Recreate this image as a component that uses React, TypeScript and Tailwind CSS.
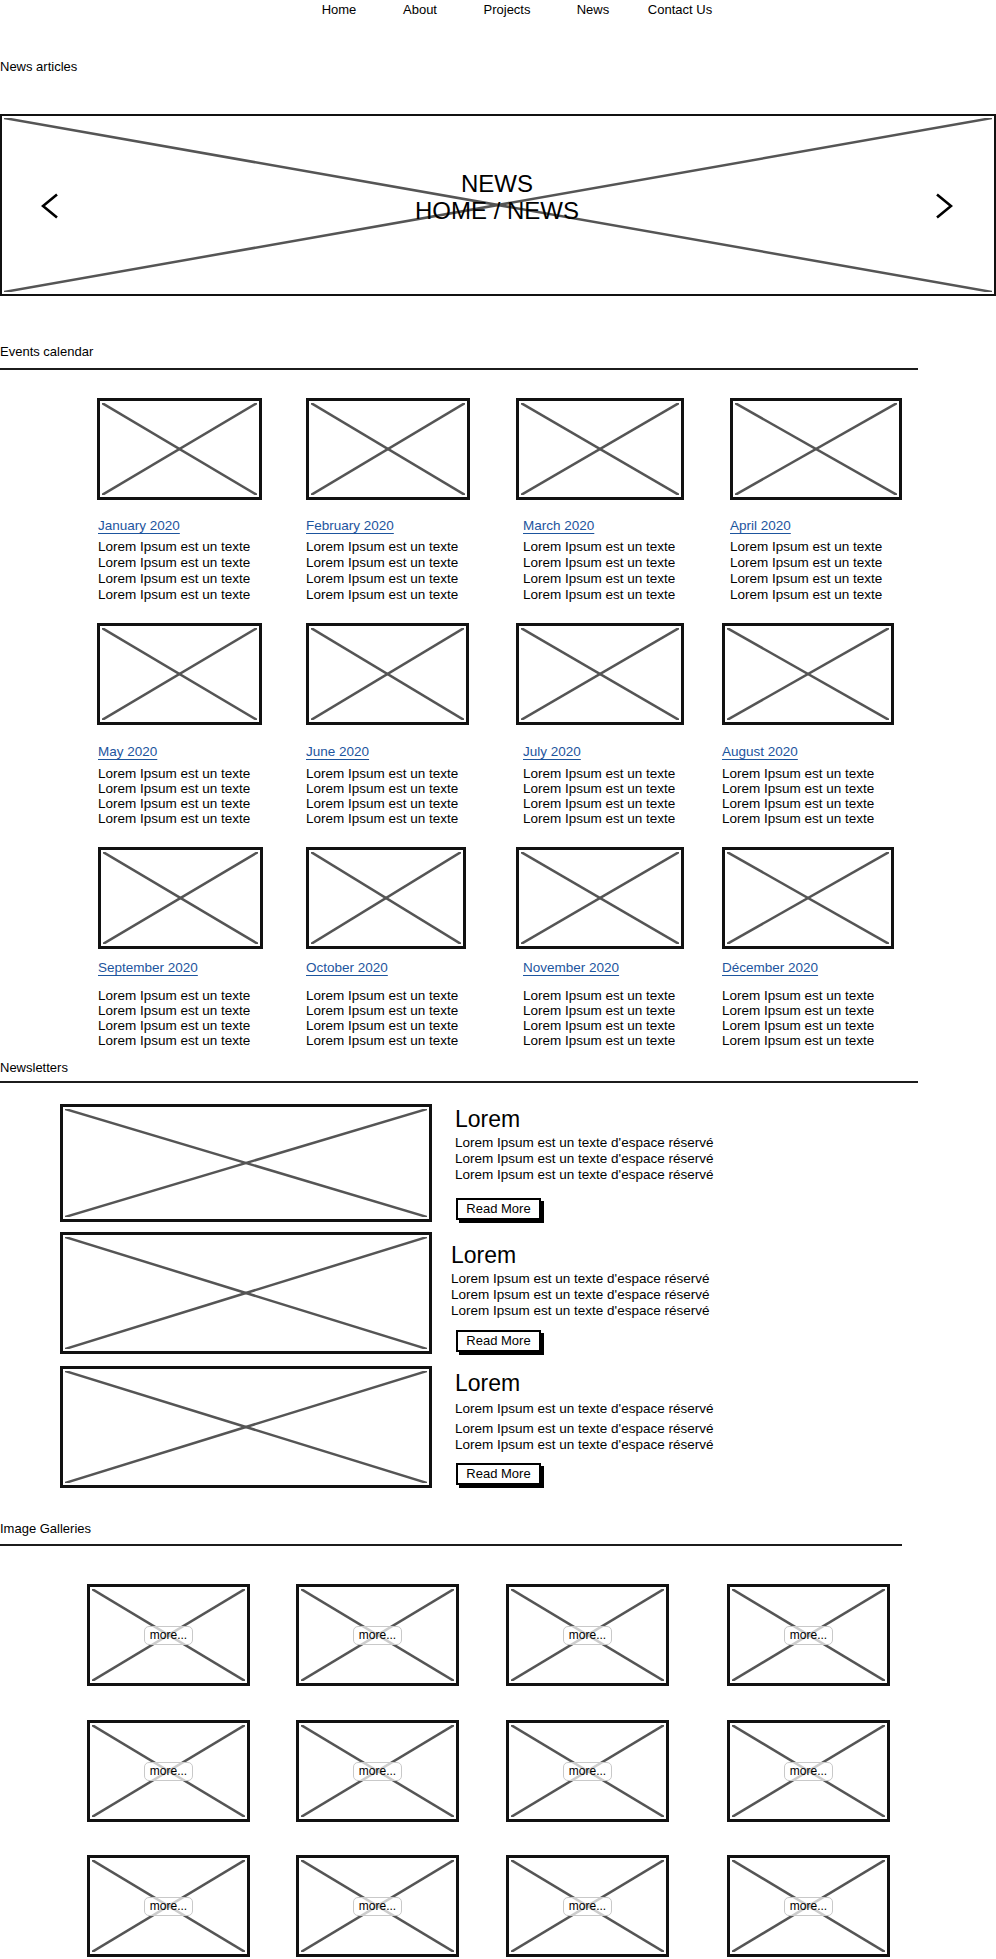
import type { ReactNode } from "react";

const font = { fontFamily: '"Liberation Sans", Arial, sans-serif' };

type XBoxProps = {
  className?: string;
  children?: ReactNode;
};

// placeholder image: frame with a grey cross
const XBox = ({ className = "", children }: XBoxProps) => (
  <div className={`relative shrink-0 bg-white border-[#111] ${className}`}>
    <svg
      className="absolute inset-[2px] h-[calc(100%-4px)] w-[calc(100%-4px)]"
      viewBox="0 0 100 100"
      preserveAspectRatio="none"
    >
      <line x1="0" y1="0" x2="100" y2="100" stroke="#555" strokeWidth="2.5" vectorEffect="non-scaling-stroke" />
      <line x1="100" y1="0" x2="0" y2="100" stroke="#555" strokeWidth="2.5" vectorEffect="non-scaling-stroke" />
    </svg>
    {children && <div className="relative h-full w-full">{children}</div>}
  </div>
);

const SectionTitle = ({ title, className = "" }: { title: string; className?: string }) => (
  <div className={`text-[13px] leading-[16px] text-black ${className}`}>{title}</div>
);

const Rule = ({ w, className = "" }: { w: string; className?: string }) => (
  <div className={`h-[2px] bg-[#1c1c1c] ${w} ${className}`} />
);

const navItems = [
  { label: "Home", w: "w-[80px]" },
  { label: "About", w: "w-[82px]" },
  { label: "Projects", w: "w-[92px]" },
  { label: "News", w: "w-[80px]" },
  { label: "Contact Us", w: "w-[94px]" },
];

type Cell = { month: string; cell: string; img: string; txt: string };
type Row = { labelMt: string; textMt: string; lh: string; mt: string; cells: Cell[] };

const rows: Row[] = [
  {
    mt: "mt-[28px]",
    labelMt: "mt-[18px]",
    textMt: "mt-[5px]",
    lh: "leading-[16px]",
    cells: [
      { month: "January 2020", cell: "w-[209px]", img: "w-[165px]", txt: "ml-[1px]" },
      { month: "February 2020", cell: "w-[210px]", img: "w-[164px]", txt: "" },
      { month: "March 2020", cell: "w-[206px]", img: "w-[168px]", txt: "ml-[7px]" },
      { month: "April 2020", cell: "w-[190px]", img: "w-[172px] ml-[8px]", txt: "ml-[8px]" },
    ],
  },
  {
    mt: "mt-[20px]",
    labelMt: "mt-[19px]",
    textMt: "mt-[6px]",
    lh: "leading-[15px]",
    cells: [
      { month: "May 2020", cell: "w-[209px]", img: "w-[165px]", txt: "ml-[1px]" },
      { month: "June 2020", cell: "w-[210px]", img: "w-[163px]", txt: "" },
      { month: "July 2020", cell: "w-[206px]", img: "w-[168px]", txt: "ml-[7px]" },
      { month: "August 2020", cell: "w-[190px]", img: "w-[172px]", txt: "" },
    ],
  },
  {
    mt: "mt-[21px]",
    labelMt: "mt-[11px]",
    textMt: "mt-[12px]",
    lh: "leading-[15px]",
    cells: [
      { month: "September 2020", cell: "w-[209px]", img: "w-[165px] ml-[1px]", txt: "ml-[1px]" },
      { month: "October 2020", cell: "w-[210px]", img: "w-[160px]", txt: "" },
      { month: "November 2020", cell: "w-[206px]", img: "w-[168px]", txt: "ml-[7px]" },
      { month: "Décember 2020", cell: "w-[190px]", img: "w-[172px]", txt: "" },
    ],
  },
];

const lorem = "Lorem Ipsum est un texte";
const loremLong = "Lorem Ipsum est un texte d'espace réservé";

const newsletters = [
  { mt: "mt-[21px]", img: "h-[118px]", txt: "ml-[23px]", headMt: "mt-[1px]", linesMt: "mt-[2px]", extra: "", btnMt: "mt-[15px]" },
  { mt: "mt-[10px]", img: "h-[122px]", txt: "ml-[19px]", headMt: "mt-[9px]", linesMt: "mt-[2px]", extra: "", btnMt: "mt-[11px]" },
  { mt: "mt-[12px]", img: "h-[122px]", txt: "ml-[23px]", headMt: "mt-[3px]", linesMt: "mt-[4px]", extra: "mt-[4px]", btnMt: "mt-[10px]" },
];

const galleryRows = ["mt-[38px]", "mt-[34px]", "mt-[33px]"];
const galleryCols = ["ml-[87px]", "ml-[46px]", "ml-[47px]", "ml-[58px]"];

const Chevron = ({ dir }: { dir: "left" | "right" }) => (
  <svg width="18" height="26" viewBox="0 0 18 26" className="shrink-0">
    <polyline
      points={dir === "left" ? "16,1.5 2,13 16,24.5" : "2,1.5 16,13 2,24.5"}
      fill="none"
      stroke="#000"
      strokeWidth="2.6"
      strokeLinejoin="miter"
    />
  </svg>
);

export default function App() {
  return (
    <div className="w-[996px] bg-white text-black" style={font}>
      {/* top nav */}
      <nav className="flex h-[19px] items-center pl-[299px] text-[13px]">
        {navItems.map((n) => (
          <div key={n.label} className={`${n.w} text-center`}>
            {n.label}
          </div>
        ))}
      </nav>

      <SectionTitle title="News articles" className="mt-[40px]" />

      {/* hero */}
      <XBox className="mt-[39px] h-[182px] w-[996px] border-2">
        <div className="flex h-full items-center pl-[39px] pr-[41px] pt-[2px]">
          <Chevron dir="left" />
          <div className="flex-1 pb-[18px] text-center text-[24px] leading-[27px] text-black">
            <div>NEWS</div>
            <div>HOME / NEWS</div>
          </div>
          <Chevron dir="right" />
        </div>
      </XBox>

      {/* events calendar */}
      <SectionTitle title="Events calendar" className="mt-[48px]" />
      <Rule w="w-[918px]" className="mt-[8px]" />

      {rows.map((row, ri) => (
        <div key={ri} className={`flex pl-[97px] ${row.mt}`}>
          {row.cells.map((c) => (
            <div key={c.month} className={`${c.cell} shrink-0`}>
              <XBox className={`h-[102px] border-[3px] ${c.img}`} />
              <div className={`${row.labelMt} ${c.txt} text-[13.5px] leading-[16px]`}>
                <span className="text-[#1d559e] underline decoration-[#1d559e] underline-offset-[3px]">
                  {c.month}
                </span>
              </div>
              <div className={`${row.textMt} ${c.txt} text-[13.5px] ${row.lh}`}>
                {[0, 1, 2, 3].map((i) => (
                  <div key={i} className="whitespace-nowrap">
                    {lorem}
                  </div>
                ))}
              </div>
            </div>
          ))}
        </div>
      ))}

      {/* newsletters */}
      <SectionTitle title="Newsletters" className="mt-[12px]" />
      <Rule w="w-[918px]" className="mt-[5px]" />

      {newsletters.map((n, i) => (
        <div key={i} className={`flex pl-[60px] ${n.mt}`}>
          <XBox className={`w-[372px] border-[3px] ${n.img}`} />
          <div className={`${n.txt} ${n.headMt}`}>
            <div className="text-[23px] leading-[28px]">Lorem</div>
            <div className={`${n.linesMt} text-[13.5px] leading-[16px]`}>
              <div>{loremLong}</div>
              <div className={n.extra}>{loremLong}</div>
              <div>{loremLong}</div>
            </div>
            <button
              className={`${n.btnMt} ${i === 1 ? "ml-[5px]" : "ml-[1px]"} flex h-[22px] w-[85px] items-center justify-center border-2 border-black bg-white text-[13px] shadow-[3px_3px_0_#000]`}
            >
              Read More
            </button>
          </div>
        </div>
      ))}

      {/* image galleries */}
      <SectionTitle title="Image Galleries" className="mt-[33px]" />
      <Rule w="w-[902px]" className="mt-[7px]" />

      {galleryRows.map((mt, ri) => (
        <div key={ri} className={`flex ${mt}`}>
          {galleryCols.map((ml, ci) => (
            <XBox key={ci} className={`${ml} h-[102px] w-[163px] border-[3px]`}>
              <div className="flex h-full items-center justify-center">
                <span className="rounded-[5px] border border-[#c9c9c9] bg-white/70 px-[5px] text-[12px] leading-[17px] text-black">
                  more...
                </span>
              </div>
            </XBox>
          ))}
        </div>
      ))}
    </div>
  );
}
